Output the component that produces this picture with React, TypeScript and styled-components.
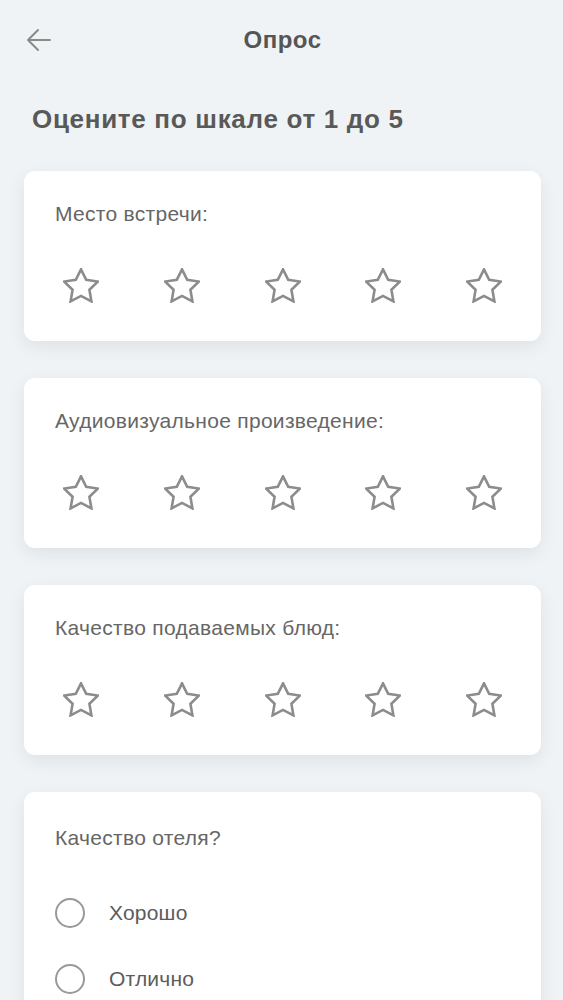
import React from "react";
import styled, { createGlobalStyle } from "styled-components";

const GlobalStyle = createGlobalStyle`
  body {
    margin: 0;
    background: #eff3f5;
    font-family: "Liberation Sans", Arial, sans-serif;
  }
`;

type RatingQuestion = { id: string; label: string };

const ratingQuestions: RatingQuestion[] = [
  { id: "place", label: "Место встречи:" },
  { id: "av", label: "Аудиовизуальное произведение:" },
  { id: "food", label: "Качество подаваемых блюд:" },
];

const hotelOptions = ["Хорошо", "Отлично"];

function StarIcon() {
  return (
    <StarSvg viewBox="1.3 1.3 21.4 20.6" width="36" height="35">
      <polygon
        points="12,2 15.09,8.26 22,9.27 17,14.14 18.18,21.02 12,17.77 5.82,21.02 7,14.14 2,9.27 8.91,8.26"
        fill="none"
        stroke="#8c8c8c"
        strokeWidth="1.55"
        strokeLinejoin="miter"
      />
    </StarSvg>
  );
}

function BackArrow() {
  return (
    <svg viewBox="0 0 26 24" width="26" height="24">
      <path
        d="M25 12H3M13 2L3 12l10 10"
        fill="none"
        stroke="#8a8a8a"
        strokeWidth="2"
        strokeLinecap="round"
        strokeLinejoin="round"
      />
    </svg>
  );
}

export default function App() {
  return (
    <Page>
      <GlobalStyle />
      <Header>
        <BackBtn aria-label="Назад">
          <BackArrow />
        </BackBtn>
        <HeaderTitle>Опрос</HeaderTitle>
        <span />
      </Header>
      <Title>Оцените по шкале от 1 до 5</Title>
      <CardList>
        {ratingQuestions.map((q) => (
          <Card key={q.id}>
            <QuestionLabel>{q.label}</QuestionLabel>
            <StarsRow>
              {[1, 2, 3, 4, 5].map((n) => (
                <StarBtn key={n} aria-label={`${n}`}>
                  <StarIcon />
                </StarBtn>
              ))}
            </StarsRow>
          </Card>
        ))}
        <Card $open>
          <QuestionLabel>Качество отеля?</QuestionLabel>
          <RadioList>
            {hotelOptions.map((opt) => (
              <RadioRow key={opt}>
                <RadioCircle />
                <RadioText>{opt}</RadioText>
              </RadioRow>
            ))}
          </RadioList>
        </Card>
      </CardList>
    </Page>
  );
}

const Page = styled.div`
  min-height: 1000px;
  padding: 0 22px 0 24px;
  box-sizing: border-box;
  background: #eff3f5;
  overflow: hidden;
`;

const Header = styled.header`
  height: 80px;
  display: grid;
  grid-template-columns: 48px 1fr 48px;
  align-items: center;
`;

const BackBtn = styled.button`
  border: none;
  background: none;
  padding: 0;
  margin-left: 1px;
  display: flex;
  align-items: center;
  cursor: pointer;
`;

const HeaderTitle = styled.h1`
  margin: 0;
  text-align: center;
  font-size: 24px;
  letter-spacing: 0.5px;
  font-weight: 700;
  color: #555;
  padding-bottom: 1px;
`;

const Title = styled.h2`
  margin: 24px 0 37px 8px;
  font-size: 26px;
  letter-spacing: 0.7px;
  line-height: 30px;
  font-weight: 700;
  color: #595959;
`;

const CardList = styled.div`
  display: flex;
  flex-direction: column;
  gap: 37px;
`;

const Card = styled.section<{ $open?: boolean }>`
  background: #fff;
  border-radius: 11px;
  height: ${(p) => (p.$open ? "auto" : "170px")};
  padding: ${(p) => (p.$open ? "35px" : "32px")} 30px
    ${(p) => (p.$open ? "40px" : "0")} 31px;
  box-sizing: border-box;
  box-shadow: 0 6px 18px rgba(0, 0, 0, 0.07);
`;

const QuestionLabel = styled.div`
  font-size: 21px;
  letter-spacing: 0.3px;
  line-height: 22px;
  color: #666;
`;

const StarsRow = styled.div`
  display: flex;
  justify-content: space-between;
  margin-top: 43px;
  padding: 0 9px 0 8px;
`;

const StarBtn = styled.button`
  border: none;
  background: none;
  padding: 0;
  display: flex;
  cursor: pointer;
`;

const StarSvg = styled.svg`
  display: block;
`;

const RadioList = styled.div`
  display: flex;
  flex-direction: column;
  gap: 30px;
  margin-top: 46px;
`;

const RadioRow = styled.label`
  display: flex;
  align-items: center;
  height: 36px;
  gap: 24px;
  cursor: pointer;
`;

const RadioCircle = styled.span`
  width: 30px;
  height: 30px;
  border-radius: 50%;
  border: 2.5px solid #999;
  box-sizing: border-box;
`;

const RadioText = styled.span`
  font-size: 21px;
  letter-spacing: 0.2px;
  color: #5c5c5c;
`;
